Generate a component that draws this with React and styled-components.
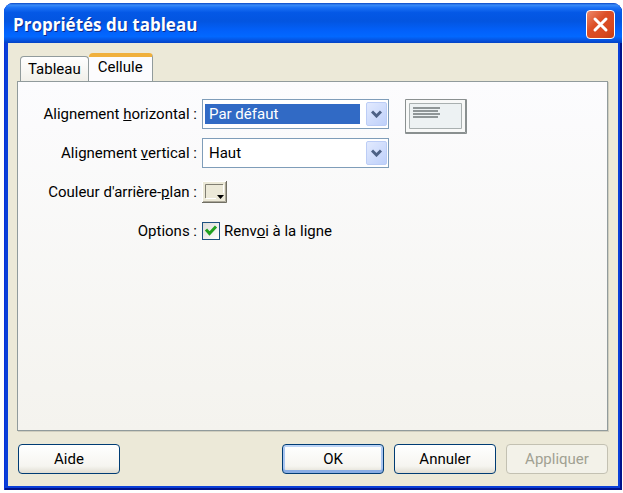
import { useState } from 'react';
import styled, { createGlobalStyle } from 'styled-components';

const GlobalStyle = createGlobalStyle`
  * {
    box-sizing: border-box;
  }
  body {
    margin: 0;
    background: #fff;
    color: #000;
    font: 15px/18px Roboto, "Liberation Sans", sans-serif;
  }
  button, select, input {
    font: inherit;
    color: inherit;
  }
`;

const SPage = styled.div`
  display: flex;
  min-height: 100vh;
  padding: 3px 1px 3px 4px;
`;

const SWindow = styled.main`
  flex: 1;
  display: flex;
  flex-direction: column;
  padding: 0 4px 4px;
  border-radius: 9px 9px 0 0;
  background: #0a3fd8;
  box-shadow: inset 1px 0 #0831d9, inset -2px -2px #00138c;
`;

const STitleBar = styled.header`
  display: flex;
  justify-content: space-between;
  align-items: center;
  height: 40px;
  margin: 0 -4px;
  padding: 3px 7px 0 9px;
  border-radius: 9px 9px 0 0;
  background: linear-gradient(
    #0a47c4 0%,
    #3a8cf8 5%,
    #1a70f4 12%,
    #0458e6 24%,
    #0355e0 45%,
    #0261fb 70%,
    #0268ff 84%,
    #0556e4 92%,
    #0342c4 100%
  );
`;

const STitle = styled.h1`
  margin: 0;
  color: #fff;
  font: bold 17px/24px "Open Sans", "Noto Sans", sans-serif;
  text-shadow: 1px 1px #0a2a8a;
`;

const SClose = styled.button`
  display: flex;
  justify-content: center;
  align-items: center;
  width: 29px;
  height: 29px;
  padding: 0;
  border: 1px solid #fff;
  border-radius: 4px;
  background: linear-gradient(135deg, #ee8a6c, #dc4f26 40%, #d8481f 75%, #c23c14);
`;

const SBody = styled.div`
  flex: 1;
  display: flex;
  flex-direction: column;
  padding: 10px 10px 12px 9px;
  background: #ece9d8;
`;

const STabs = styled.div`
  display: flex;
  align-items: flex-end;
  padding-left: 3px;
`;

const STab = styled.button`
  height: ${({ $active }) => ($active ? 29 : 25)}px;
  margin-bottom: ${({ $active }) => ($active ? -1 : 0)}px;
  padding: 0 ${({ $active }) => ($active ? '9px 5px' : '7px 0')};
  border: 1px solid #919b9c;
  border-top: ${({ $active }) => ($active ? '4px solid #f0b03c' : '1px solid #919b9c')};
  border-bottom: 0;
  border-left-width: ${({ $active }) => ($active ? 0 : 1)}px;
  border-radius: 4px 4px 0 0;
  background: ${({ $active }) => ($active ? '#fcfcfe' : 'linear-gradient(#fff, #f1f0ea)')};
`;

const SPanel = styled.section`
  flex: 1;
  display: flex;
  align-items: flex-start;
  gap: 16px;
  padding-top: 17px;
  border: 1px solid #919b9c;
  background: linear-gradient(#fcfcfe, #f4f3ee);
  box-shadow: 1px 1px #d0cebf;
`;

const SForm = styled.form`
  display: grid;
  grid-template-columns: 179px 187px;
  gap: 9px 5px;
  align-items: center;
`;

const SLabel = styled.label`
  text-align: right;
  white-space: nowrap;
`;

const SSelectBox = styled.div`
  position: relative;
`;

const SSelect = styled.select`
  display: block;
  width: 100%;
  height: 30px;
  padding: 4px 28px 4px 2px;
  border: 1px solid #7f9db9;
  border-radius: 0;
  outline: 0;
  appearance: none;
  text-indent: 4px;
  color: ${({ $selected }) => ($selected ? '#fff' : '#000')};
  background: ${({ $selected }) =>
    $selected ? 'linear-gradient(#316ac5, #316ac5) content-box, #fff' : '#fff'};
  option {
    color: #000;
    background: #fff;
  }
`;

const SArrow = styled.span`
  position: absolute;
  top: 3px;
  right: 2px;
  bottom: 3px;
  display: flex;
  justify-content: center;
  align-items: center;
  width: 21px;
  border: 1px solid #bccdf6;
  border-radius: 2px;
  background: linear-gradient(135deg, #e2eafe, #bed0fa);
  pointer-events: none;
`;

const SPreview = styled.svg`
  display: block;
  width: 62px;
  height: 35px;
`;

const SCell = styled.div`
  display: flex;
  align-items: center;
  gap: 4px;
  height: 30px;
`;

const SColor = styled.button`
  display: flex;
  width: 25px;
  height: 22px;
  padding: 0;
  border: 0;
  background: none;
`;

const SCheck = styled.input`
  width: 18px;
  height: 18px;
  margin: 0;
  border: 1px solid #1c5180;
  appearance: none;
  background: linear-gradient(135deg, #dcdcd7, #fff);
`;

const SCheckBox = styled.span`
  display: grid;
  > * {
    grid-area: 1 / 1;
  }
  svg {
    pointer-events: none;
  }
`;

const SFooter = styled.footer`
  display: flex;
  gap: 10px;
  padding: 13px 0 0 1px;
  button:first-child {
    margin-right: auto;
  }
`;

const SButton = styled.button`
  width: 102px;
  height: 30px;
  padding: 0;
  border: 1px solid #003c74;
  border-radius: 4px;
  background: linear-gradient(#fff, #f6f5f0 75%, #e0ddd2);
  box-shadow: ${({ $primary }) =>
    $primary ? 'inset 0 2px #bcd4f6, inset 0 -3px #89ade4, inset 2px 0 #a9c5f0, inset -2px 0 #a9c5f0' : 'none'};
  &:disabled {
    border-color: #c3c1b2;
    color: #a1a192;
    background: #f3f2e9;
  }
`;

const SelectField = ({ id, options, selected }) => (
  <SSelectBox>
    <SSelect id={id} $selected={selected}>
      {options.map((option) => (
        <option key={option}>{option}</option>
      ))}
    </SSelect>
    <SArrow>
      <svg width="11" height="8" viewBox="0 0 11 8" fill="none" stroke="#4d6185" strokeWidth="3">
        <path d="M1 1.5 L5.5 6 L10 1.5" />
      </svg>
    </SArrow>
  </SSelectBox>
);

const App = () => {
  const [wrap, setWrap] = useState(true);

  return (
    <SPage>
      <GlobalStyle />
      <SWindow>
        <STitleBar>
          <STitle>Propriétés du tableau</STitle>
          <SClose type="button" aria-label="Fermer">
            <svg width="17" height="17" viewBox="0 0 17 17" stroke="#fff" strokeWidth="3" strokeLinecap="round">
              <path d="M3 3 L14 14 M14 3 L3 14" />
            </svg>
          </SClose>
        </STitleBar>
        <SBody>
          <STabs role="tablist">
            <STab type="button" role="tab" aria-selected="false">Tableau</STab>
            <STab type="button" role="tab" aria-selected="true" $active>Cellule</STab>
          </STabs>
          <SPanel role="tabpanel">
            <SForm>
              <SLabel htmlFor="horizontal">Alignement <u>h</u>orizontal :</SLabel>
              <SelectField id="horizontal" options={['Par défaut', 'Gauche', 'Centre', 'Droite']} selected />
              <SLabel htmlFor="vertical">Alignement <u>v</u>ertical :</SLabel>
              <SelectField id="vertical" options={['Haut', 'Milieu', 'Bas']} />
              <SLabel htmlFor="color">Couleur d'arrière-<u>p</u>lan :</SLabel>
              <SCell>
                <SColor id="color" type="button">
                  <svg width="25" height="22" viewBox="0 0 25 22">
                    <path d="M0 0H25V22H0Z" fill="#ece9d8" />
                    <path d="M0 21.5H24.5V0" fill="none" stroke="#716f64" />
                    <path d="M1 20.5H23.5V1" fill="none" stroke="#aca899" />
                    <path d="M0.5 21V0.5H24" fill="none" stroke="#fff" />
                    <path d="M3.5 17V3.5H21" fill="none" stroke="#807e72" />
                    <path d="M4 17.5H14M21.5 4V12" fill="none" stroke="#fff" />
                    <path d="M15 14H22L18.5 18Z" fill="#000" />
                  </svg>
                </SColor>
              </SCell>
              <SLabel as="span">Options :</SLabel>
              <SCell>
                <SCheckBox>
                  <SCheck id="wrap" type="checkbox" checked={wrap} onChange={() => setWrap(!wrap)} />
                  {wrap && (
                    <svg width="18" height="18" viewBox="0 0 18 18" fill="none" stroke="#21a121" strokeWidth="3">
                      <path d="M4 7.5 L7.5 11.5 L14 4.5" />
                    </svg>
                  )}
                </SCheckBox>
                <label htmlFor="wrap">Renv<u>o</u>i à la ligne</label>
              </SCell>
            </SForm>
            <SPreview viewBox="0 0 62 35" fill="none">
              <path d="M0.5 0.5H61.5V34.5H0.5Z" fill="#f8f9f8" stroke="#8a9090" />
              <path d="M1 33.5H60.5V1" stroke="#8a9090" />
              <path d="M4.5 4.5H56.5V29.5H4.5Z" fill="#edf2f3" stroke="#a9b0b0" />
              <path d="M8 9H35M8 12H33M8 15H35M8 18H33" stroke="#70787a" strokeWidth="1.5" />
            </SPreview>
          </SPanel>
          <SFooter>
            <SButton type="button">Aide</SButton>
            <SButton type="button" $primary>OK</SButton>
            <SButton type="button">Annuler</SButton>
            <SButton type="button" disabled>Appliquer</SButton>
          </SFooter>
        </SBody>
      </SWindow>
    </SPage>
  );
};

export default App;
